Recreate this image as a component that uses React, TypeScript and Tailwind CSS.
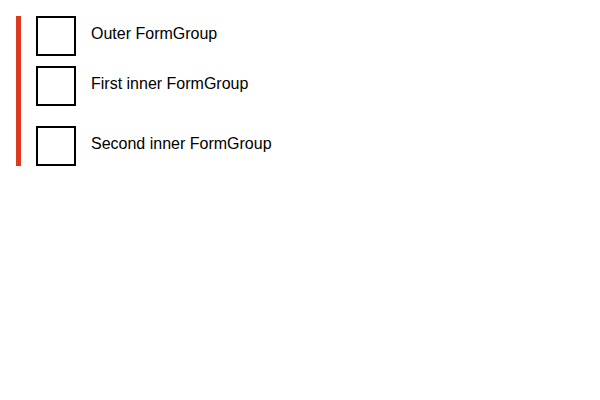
function Row({ label }: { label: string }) {
  return (
    <div className="flex h-10 items-center gap-[15px]">
      <span className="h-10 w-10 shrink-0 border-2 border-black bg-white" />
      <span className="pb-[5px] text-base text-black">{label}</span>
    </div>
  );
}

export default function App() {
  return (
    <div className="min-h-[400px] bg-white p-4 font-['Liberation_Sans',Arial,sans-serif]">
      <div className="flex flex-col border-l-[5px] border-[#dc3a1f] pl-[15px]">
        <Row label="Outer FormGroup" />
        <div className="mt-[10px] flex flex-col gap-5">
          <Row label="First inner FormGroup" />
          <Row label="Second inner FormGroup" />
        </div>
      </div>
    </div>
  );
}
